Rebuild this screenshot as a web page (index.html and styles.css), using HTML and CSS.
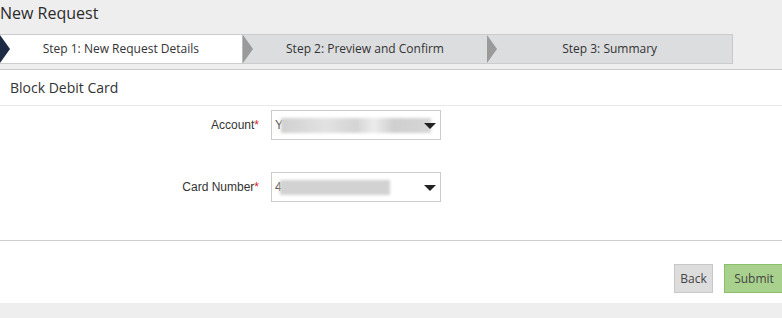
FILE: index.html
```html
<!DOCTYPE html>
<html lang="en">
<head>
  <meta charset="UTF-8" />
  <meta name="viewport" content="width=device-width, initial-scale=1.0" />
  <title>New Request</title>
  <link rel="stylesheet" href="styles.css">
</head>
<body>
  <h1 class="page-title">New Request</h1>

  <div class="steps">
    <div class="step step-active">Step 1: New Request Details</div>
    <div class="step">Step 2: Preview and Confirm</div>
    <div class="step">Step 3: Summary</div>
  </div>

  <div class="panel">
    <div class="panel-head">Block Debit Card</div>

    <div class="form">
      <div class="form-row">
        <label class="form-label">Account<span class="req">*</span></label>
        <div class="fake-select">
          <span class="first-char">Y</span>
          <span class="masked masked-wide"></span>
          <span class="caret"></span>
        </div>
      </div>
      <div class="form-row">
        <label class="form-label">Card Number<span class="req">*</span></label>
        <div class="fake-select">
          <span class="first-char">4</span>
          <span class="masked masked-short"></span>
          <span class="caret"></span>
        </div>
      </div>
    </div>

    <div class="actions">
      <button class="btn btn-back">Back</button>
      <button class="btn btn-submit">Submit</button>
    </div>
  </div>
</body>
</html>
```

FILE: styles.css
```css
body {
  margin: 0;
  background-color: #eeeeee;
  font-family: "Open Sans", Arial, sans-serif;
  color: #333;
  overflow: hidden;
}
.page-title {
  margin: 0;
  padding: 2px 0 0 0;
  height: 32px;
  font-size: 16px;
  font-weight: normal;
  line-height: 22px;
  color: #2b2b2b;
}
.steps {
  display: flex;
  width: 733px;
  height: 28px;
  border-top: 1px solid #cccccc;
  border-bottom: 1px solid #cccccc;
  background: #dcdddf;
}
.step {
  position: relative;
  width: 245px;
  line-height: 28px;
  font-size: 12px;
  text-align: center;
  color: #333;
}
.step::before {
  content: "";
  position: absolute;
  left: 0;
  top: 0;
  border-top: 14px solid transparent;
  border-bottom: 14px solid transparent;
  border-left: 10px solid #9a9a9a;
}
.step:last-child {
  border-right: 1px solid #c8c8c8;
}
.step-active {
  width: 242px;
  background: #ffffff;
  border-right: 1px solid #bbbbbb;
}
.step-active::before {
  border-left-color: #1c2a44;
}
.panel {
  margin-top: 5px;
  background: #ffffff;
  border-top: 1px solid #cccccc;
}
.panel-head {
  height: 35px;
  padding-left: 10px;
  line-height: 36px;
  font-size: 14px;
  border-bottom: 1px solid #e8e8e8;
}
.form {
  padding: 4px 0 38px 0;
  border-bottom: 1px solid #cccccc;
}
.form-row {
  display: flex;
  align-items: center;
  height: 30px;
  margin-bottom: 32px;
}
.form-row:last-child {
  margin-bottom: 0;
}
.form-label {
  width: 271px;
  padding-right: 12px;
  box-sizing: border-box;
  text-align: right;
  font-family: Arial, "Liberation Sans", sans-serif;
  font-size: 12px;
  color: #333;
}
.req {
  color: #e02020;
}
.fake-select {
  position: relative;
  display: flex;
  align-items: center;
  width: 170px;
  height: 30px;
  box-sizing: border-box;
  border: 1px solid #cccccc;
  padding-left: 3px;
  font-family: Arial, "Liberation Sans", sans-serif;
  font-size: 12px;
  color: #555;
}
.first-char {
  margin-right: -2px;
}
.masked {
  height: 15px;
  background: #d2d2d2;
  filter: blur(1.5px);
}
.masked-wide {
  width: 150px;
  background: linear-gradient(90deg, #d0d0d0, #e2e2e2 30%, #d4d4d4 50%, #ececec 62%, #cfcfcf 75%, #d6d6d6);
}
.masked-short {
  width: 110px;
}
.caret {
  position: absolute;
  right: 4px;
  top: 12px;
  border-left: 6px solid transparent;
  border-right: 6px solid transparent;
  border-top: 6px solid #222;
}
.actions {
  display: flex;
  justify-content: flex-end;
  gap: 11px;
  height: 62px;
  padding-top: 23px;
  box-sizing: border-box;
  margin-right: -2px;
}
.btn {
  height: 29px;
  padding: 0 8px;
  font-family: "Open Sans", Arial, sans-serif;
  font-size: 12px;
  color: #444;
  border: 1px solid #c8c8c8;
  cursor: pointer;
}
.btn-back {
  width: 39px;
  padding: 0;
  background: #dddddd;
}
.btn-submit {
  width: 60px;
  padding: 0;
  background: #a9d18e;
  border-color: #8bbf6c;
}
```
